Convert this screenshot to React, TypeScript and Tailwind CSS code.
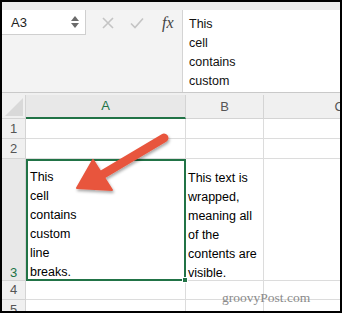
import React from 'react';

const cellFont = { fontFamily: '"Liberation Sans", Arial, sans-serif' };

export default function App() {
  const aLines = ['This', 'cell', 'contains', 'custom', 'line', 'breaks.'];
  const bLines = ['This text is', 'wrapped,', 'meaning all', 'of the', 'contents are', 'visible.'];

  return (
    <div className="w-[342px] h-[313px] border-2 border-black bg-white relative overflow-hidden flex flex-col" style={cellFont}>
      {/* window strip */}
      <div className="h-[8px] bg-[#ebebeb] shrink-0" />

      {/* formula bar */}
      <div className="h-[83px] flex shrink-0 border-b border-[#c9c9c9]">
        <div className="w-[180px] bg-[#f3f3f3] flex flex-col">
          <div className="h-[25px] flex items-center">
            <div className="w-[84px] h-[25px] bg-white border-r border-b border-[#cfcfcf] flex items-center justify-between pl-[9px] pr-[6px]">
              <span className="text-[13px] text-[#222] pt-[2px]">A3</span>
              <div className="flex flex-col gap-[2px]">
                <svg width="8" height="5" viewBox="0 0 8 5"><path d="M4 0 L8 5 L0 5 Z" fill="#6b6b6b" /></svg>
                <svg width="8" height="5" viewBox="0 0 8 5"><path d="M0 0 L8 0 L4 5 Z" fill="#6b6b6b" /></svg>
              </div>
            </div>
            <div className="flex items-center flex-1 pl-[16px] gap-[16px]">
              <svg width="12" height="12" viewBox="0 0 12 12"><path d="M1 1 L11 11 M11 1 L1 11" stroke="#c4c4c4" strokeWidth="1.6" /></svg>
              <svg width="14" height="12" viewBox="0 0 14 12"><path d="M1 6.5 L5 10.5 L13 1.5" stroke="#c4c4c4" strokeWidth="1.6" fill="none" /></svg>
              <span className="ml-[2px] text-[16px] italic text-[#444]" style={{ fontFamily: '"Liberation Serif", "Times New Roman", serif' }}>fx</span>
            </div>
          </div>
        </div>
        <div className="flex-1 bg-white border-l border-[#d4d4d4] pl-[6px] pt-[5px] text-[12.5px] leading-[19px] text-[#111]">
          <div>This</div>
          <div>cell</div>
          <div>contains</div>
          <div>custom</div>
        </div>
      </div>

      <div className="h-[2px] bg-[#f0f0f0] shrink-0" />

      {/* sheet grid */}
      <div className="flex-1 grid grid-cols-[24px_160px_78px_1fr] grid-rows-[24px_20px_20px_122px_19px_1fr] text-[12.5px] text-black">
        {/* header row */}
        <div className="bg-[#f0f0f0] border-r border-b border-[#d4d4d4] flex items-end justify-end p-[2px]">
          <svg width="18" height="18" viewBox="0 0 18 18"><path d="M18 0 L18 18 L0 18 Z" fill="#d9d9d9" /></svg>
        </div>
        <div className="bg-[#e8e8e8] border-r border-[#d4d4d4] border-b-2 border-b-[#217346] flex items-center justify-center text-[#217346] text-[13px]">A</div>
        <div className="bg-[#f0f0f0] border-r border-b border-[#d4d4d4] flex items-center justify-center text-[#555] text-[13px]">B</div>
        <div className="bg-[#f0f0f0] border-b border-[#d4d4d4] flex items-center justify-end text-[#555] text-[13px] -mr-[4px]">C</div>

        {/* row 1 */}
        <div className="bg-[#f0f0f0] border-r border-b border-[#d4d4d4] flex items-center pl-[8px] text-[#555] text-[13px]">1</div>
        <div className="border-r border-b border-[#dcdcdc]" />
        <div className="border-r border-b border-[#dcdcdc]" />
        <div className="border-b border-[#dcdcdc]" />

        {/* row 2 */}
        <div className="bg-[#f0f0f0] border-r border-b border-[#d4d4d4] flex items-center pl-[8px] text-[#555] text-[13px]">2</div>
        <div className="border-r border-b border-[#dcdcdc]" />
        <div className="border-r border-b border-[#dcdcdc]" />
        <div className="border-b border-[#dcdcdc]" />

        {/* row 3 */}
        <div className="bg-[#e8e8e8] border-r border-b border-[#d4d4d4] flex items-end pl-[8px] text-[#217346] text-[13px] leading-[19px]">
          <span className="translate-y-[2px]">3</span>
        </div>
        <div className="relative border-2 border-[#217346] flex flex-col justify-end pl-[2px] leading-[19px]">
          <div className="translate-y-[3px]">
            {aLines.map(l => <div key={l}>{l}</div>)}
          </div>
          <div className="absolute -right-[4px] -bottom-[4px] w-[6px] h-[6px] bg-[#217346] border border-white" />
        </div>
        <div className="border-r border-b border-[#dcdcdc] flex flex-col justify-end pl-[2px] leading-[19px]">
          <div className="translate-y-[3px]">
            {bLines.map(l => <div key={l} className="whitespace-nowrap">{l}</div>)}
          </div>
        </div>
        <div className="border-b border-[#dcdcdc]" />

        {/* row 4 */}
        <div className="bg-[#f0f0f0] border-r border-b border-[#d4d4d4] flex items-center pl-[8px] text-[#555] text-[13px]">4</div>
        <div className="border-r border-b border-[#dcdcdc]" />
        <div className="border-r border-b border-[#dcdcdc]" />
        <div className="border-b border-[#dcdcdc]" />

        {/* row 5 */}
        <div className="bg-[#f0f0f0] border-r border-[#d4d4d4] flex items-start pl-[8px] text-[#555] text-[13px]">5</div>
        <div className="border-r border-[#dcdcdc]" />
        <div className="border-r border-[#dcdcdc]" />
        <div />
      </div>

      {/* red arrow overlay */}
      <svg className="absolute left-0 top-0 pointer-events-none" width="342" height="313" viewBox="0 0 342 313">
        <defs>
          <filter id="sh" x="-20%" y="-20%" width="140%" height="140%">
            <feDropShadow dx="1" dy="2" stdDeviation="1.5" floodColor="#000" floodOpacity="0.35" />
          </filter>
        </defs>
        <g filter="url(#sh)">
          <line x1="162" y1="136" x2="98" y2="174" stroke="#e8553e" strokeWidth="9" strokeLinecap="round" />
          <path d="M75 186 L91 158 L110 188 Z" fill="#e8553e" stroke="#e8553e" strokeWidth="2" strokeLinejoin="round" />
        </g>
      </svg>

      {/* watermark */}
      <div className="absolute left-[220px] top-[286px] text-[13.5px] text-[#8a8a8a]" style={{ fontFamily: '"Liberation Serif", "Times New Roman", serif' }}>
        groovyPost.com
      </div>
    </div>
  );
}
